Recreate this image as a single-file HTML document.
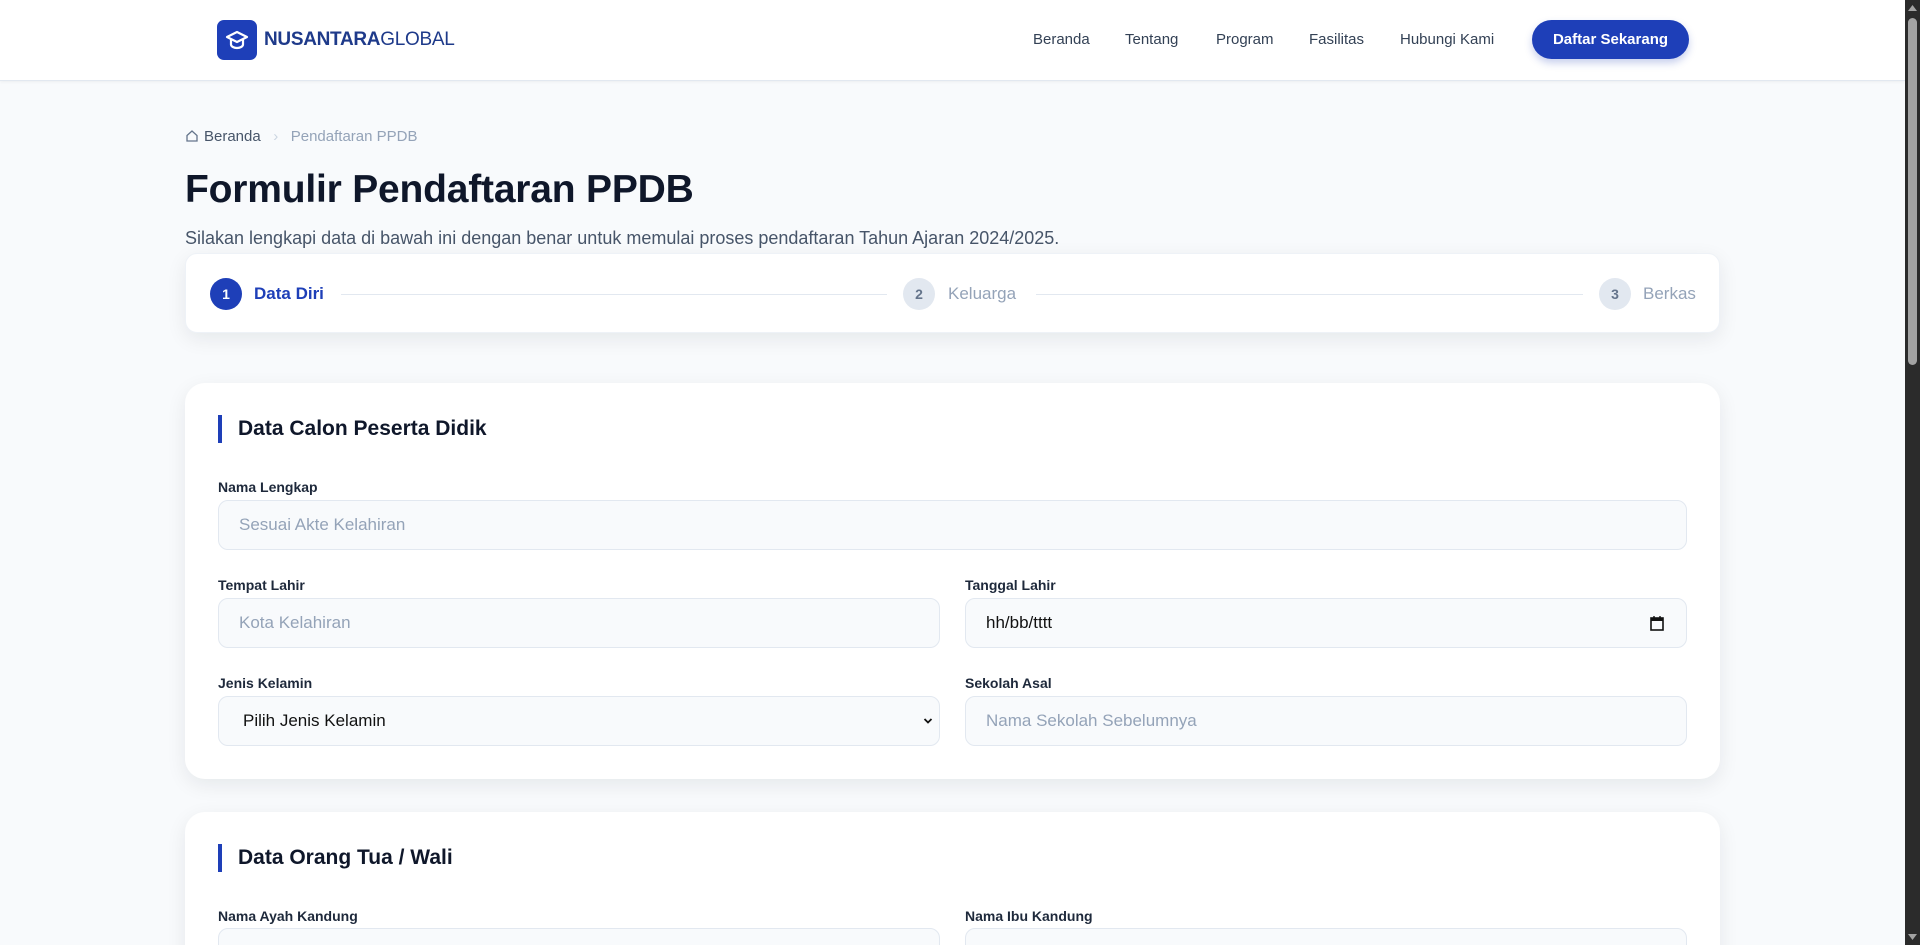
<!DOCTYPE html>
<html><head><meta charset="utf-8"><style>
*{box-sizing:border-box;margin:0;padding:0}
html,body{width:1920px;height:945px;overflow:hidden}
body{background:#f8fafc;font-family:"Liberation Sans",sans-serif;color:#0f172a;position:relative}
.hdr{position:absolute;left:0;top:0;width:1905px;height:81px;background:#fff;border-bottom:1px solid #e2e8f0;box-shadow:0 1px 3px rgba(0,0,0,.05)}
.logo{position:absolute;left:217px;top:20px;width:40px;height:40px;background:#1e3fb8;border-radius:7px}
.brand{position:absolute;left:264px;top:29px;font-size:19px;color:#1e3a8a;letter-spacing:-.3px}
.brand b{font-weight:700}
.nav a{position:absolute;top:31px;font-size:15px;color:#334155;text-decoration:none}
.btn{position:absolute;left:1532px;top:20px;width:157px;height:39px;background:#1e3fb8;color:#fff;border-radius:20px;font-size:15px;font-weight:700;text-align:center;line-height:39px;box-shadow:0 4px 8px rgba(30,63,184,.25)}
.bc{position:absolute;left:185px;top:128px;font-size:15px;color:#475569}
.bc span{color:#94a3b8}
h1{position:absolute;left:185px;top:168px;font-size:39px;font-weight:700;color:#0f172a;letter-spacing:-.2px}
.sub{position:absolute;left:185px;top:228px;font-size:18px;color:#475569}
.card{position:absolute;left:185px;width:1535px;background:#fff;box-shadow:0 6px 20px rgba(15,23,42,.08)}
.stp{top:253px;height:80px;border-radius:12px;border:1px solid #eef2f7}
.circ{position:absolute;top:24px;width:32px;height:32px;border-radius:50%;background:#e2e8f0;color:#64748b;font-size:14px;font-weight:700;text-align:center;line-height:32px}
.sl{position:absolute;top:30px;font-size:17px;color:#94a3b8}
.line{position:absolute;top:40px;height:1px;background:#e2e8f0}
.c1{top:383px;height:396px;border-radius:20px}
.c2{top:812px;height:200px;border-radius:20px}
.ht{position:absolute;left:33px;width:4px;height:28px;background:#1e3fb8}
.htt{position:absolute;left:53px;font-size:21px;font-weight:700;color:#0f172a}
.lb{position:absolute;font-size:14px;font-weight:700;color:#1e293b}
.in{position:absolute;height:50px;background:#f8fafc;border:1px solid #e2e8f0;border-radius:10px;font-size:17px;color:#94a3b8;padding-left:20px;line-height:48px}
.scr{position:absolute;left:1905px;top:0;width:15px;height:945px;background:#2b2b2b}
.thumb{position:absolute;left:3px;top:18px;width:9px;height:347px;background:#a3a3a3;border-radius:5px}
</style></head><body>
<div class="hdr">
<div class="logo"><svg width="40" height="40" viewBox="0 0 40 40"><path d="M10 17l10-5 10 5-10 5z" fill="none" stroke="#fff" stroke-width="2.2" stroke-linejoin="round"/><path d="M14 19.5v5c0 2 3 3.5 6 3.5s6-1.5 6-3.5v-5" fill="none" stroke="#fff" stroke-width="2.2"/></svg></div>
<div class="brand"><b>NUSANTARA</b>GLOBAL</div>
<div class="nav"><a style="left:1033px">Beranda</a><a style="left:1125px">Tentang</a><a style="left:1216px">Program</a><a style="left:1309px">Fasilitas</a><a style="left:1400px">Hubungi Kami</a></div>
<div class="btn">Daftar Sekarang</div>
</div>
<div class="bc"><svg width="14" height="14" viewBox="0 0 14 14" style="vertical-align:-2px;margin-right:5px"><path d="M2 6.5L7 2l5 4.5V12H2z" fill="none" stroke="#64748b" stroke-width="1.3"/></svg>Beranda &nbsp;&nbsp;<span style="color:#cbd5e1">›</span>&nbsp;&nbsp; <span>Pendaftaran PPDB</span></div>
<h1>Formulir Pendaftaran PPDB</h1>
<div class="sub">Silakan lengkapi data di bawah ini dengan benar untuk memulai proses pendaftaran Tahun Ajaran 2024/2025.</div>
<div class="card stp">
<div class="circ" style="left:24px;background:#1e3fb8;color:#fff">1</div><div class="sl" style="left:68px;color:#1e3fb8;font-weight:700">Data Diri</div>
<div class="line" style="left:155px;width:546px"></div>
<div class="circ" style="left:717px">2</div><div class="sl" style="left:762px">Keluarga</div>
<div class="line" style="left:850px;width:547px"></div>
<div class="circ" style="left:1413px">3</div><div class="sl" style="left:1457px">Berkas</div>
</div>
<div class="card c1">
<div class="ht" style="top:32px"></div><div class="htt" style="top:34px">Data Calon Peserta Didik</div>
<div class="lb" style="left:33px;top:96px">Nama Lengkap</div>
<div class="in" style="left:33px;top:117px;width:1469px">Sesuai Akte Kelahiran</div>
<div class="lb" style="left:33px;top:194px">Tempat Lahir</div>
<div class="in" style="left:33px;top:215px;width:722px">Kota Kelahiran</div>
<div class="lb" style="left:780px;top:194px">Tanggal Lahir</div>
<div class="in" style="left:780px;top:215px;width:722px;color:#111;padding-left:20px">hh/bb/tttt<svg style="position:absolute;right:22px;top:16px" width="14" height="16" viewBox="0 0 14 16"><rect x="1" y="3" width="12" height="12" fill="none" stroke="#111" stroke-width="1.6"/><rect x="1" y="3" width="12" height="3" fill="#111"/><path d="M4 1v3M10 1v3" stroke="#111" stroke-width="1.4"/></svg></div>
<div class="lb" style="left:33px;top:292px">Jenis Kelamin</div>
<div class="in" style="left:33px;top:313px;width:722px;color:#111;padding-left:24px">Pilih Jenis Kelamin<svg style="position:absolute;right:6px;top:20px" width="10" height="8" viewBox="0 0 10 8"><path d="M1.5 2l3.5 3.5L8.5 2" fill="none" stroke="#111" stroke-width="1.8"/></svg></div>
<div class="lb" style="left:780px;top:292px">Sekolah Asal</div>
<div class="in" style="left:780px;top:313px;width:722px">Nama Sekolah Sebelumnya</div>
</div>
<div class="card c2">
<div class="ht" style="top:32px"></div><div class="htt" style="top:34px">Data Orang Tua / Wali</div>
<div class="lb" style="left:33px;top:96px">Nama Ayah Kandung</div>
<div class="in" style="left:33px;top:116px;width:722px"></div>
<div class="lb" style="left:780px;top:96px">Nama Ibu Kandung</div>
<div class="in" style="left:780px;top:116px;width:722px"></div>
</div>
<div class="scr"><div class="thumb"></div>
<svg style="position:absolute;left:3px;top:4px" width="9" height="8"><path d="M4.5 1L9 7H0z" fill="#a3a3a3"/></svg>
<svg style="position:absolute;left:3px;top:933px" width="9" height="8"><path d="M0 1h9L4.5 7z" fill="#a3a3a3"/></svg></div>
</body></html>
